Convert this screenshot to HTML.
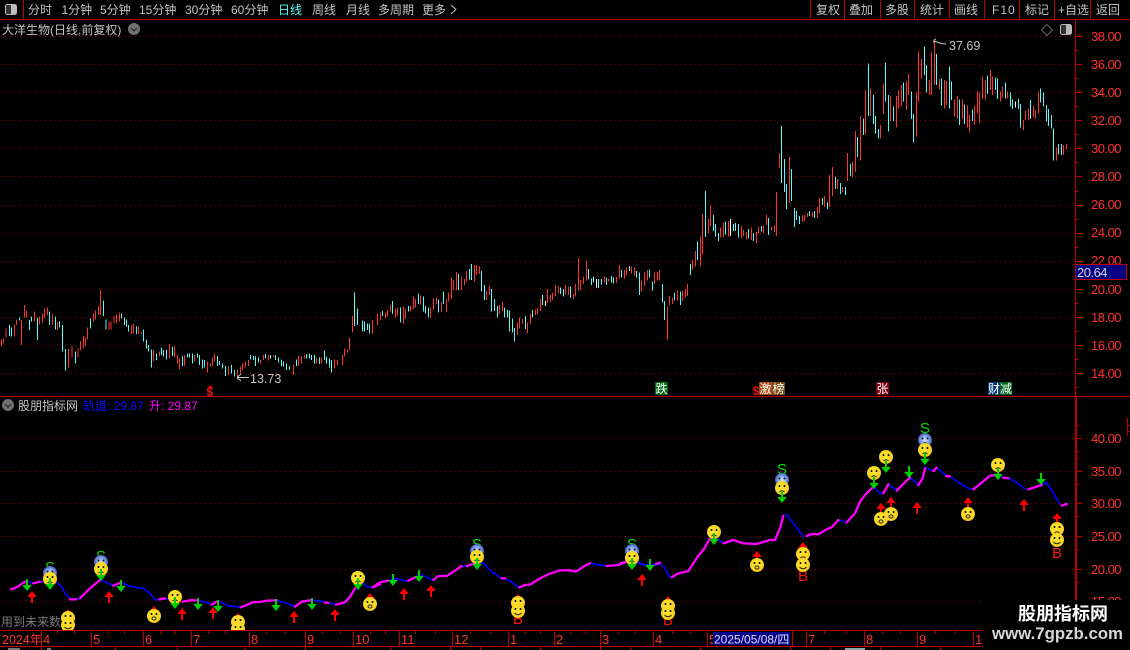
<!DOCTYPE html>
<html><head><meta charset="utf-8"><style>
html,body{margin:0;padding:0;background:#000;width:1130px;height:650px;overflow:hidden}
svg{display:block}
text{font-family:"Liberation Sans","Noto Sans CJK SC",sans-serif;font-size:12px}
.t{fill:#c4c4c4}
.y{fill:#ff3232;letter-spacing:-.5px;font-size:13px}
.m{fill:#ff3232;font-size:13px}
.b{fill:#fff;font-size:12px}
.bars path{fill:none;stroke-width:3;shape-rendering:crispEdges}
.R{stroke:#ff3232}.C{stroke:#54fcfc}.W{stroke:#fff}
.ln path{fill:none;stroke-linecap:round;stroke-linejoin:round}
.M{stroke:#ff00ff;stroke-width:7}.B{stroke:#0000ff;stroke-width:5}
.S{fill:#00e000;font-size:15px}
.Bt{fill:#ff1010;font-size:15px}
</style></head><body>
<svg width="1130" height="650" viewBox="0 0 1130 650" xmlns="http://www.w3.org/2000/svg">
<defs>
<radialGradient id="yg" cx=".45" cy=".4" r=".7"><stop offset="0" stop-color="#ffe830"/><stop offset=".75" stop-color="#f8d020"/><stop offset="1" stop-color="#c89810"/></radialGradient>
<radialGradient id="bg" cx=".5" cy=".5" r=".6"><stop offset="0" stop-color="#d0e4ff"/><stop offset=".6" stop-color="#7090e0"/><stop offset="1" stop-color="#203080"/></radialGradient>
<g id="fS"><circle r="7" fill="url(#yg)"/><circle cx="-2.500" cy="-2" r="1"/><circle cx="2.500" cy="-2" r="1"/><path d="M-3.500 2Q0 5.500 3.500 2" fill="none" stroke="#222" stroke-width="1"/></g>
<g id="fF"><circle r="7" fill="url(#yg)"/><circle cx="-2.500" cy="-2" r="1"/><circle cx="2.500" cy="-2" r="1"/><path d="M-2.500 4Q0 1.500 2.500 4" fill="none" stroke="#222" stroke-width="1"/></g>
<g id="fO"><circle r="7" fill="url(#yg)"/><circle cx="-2.500" cy="-2" r="1"/><circle cx="2.500" cy="-2" r="1"/><ellipse cy="2.500" rx="2" ry="1.600" fill="none" stroke="#222" stroke-width="1"/></g>
<g id="fB"><circle r="7" fill="url(#bg)"/><circle cx="-2.500" cy="-1.500" r="1" fill="#111"/><circle cx="2.500" cy="-1.500" r="1" fill="#111"/><path d="M-2.500 4Q0 1.500 2.500 4" fill="none" stroke="#111" stroke-width="1"/></g>
<g id="aG"><path d="M-1 0H1V6H4.800L0 12L-4.800 6H-1Z" fill="#00d000"/></g>
<g id="aR"><path d="M0 0L4.800 6H1V12H-1V6H-4.800Z" fill="#ff0000"/></g>
</defs>
<rect width="1130" height="650" fill="#000"/>

<!-- grids -->
<g stroke="#900000" stroke-width="1" stroke-dasharray="1 4" fill="none" shape-rendering="crispEdges">
<path d="M0 36.500H1075M0 64.500H1075M0 92.500H1075M0 120.500H1075M0 148.500H1075M0 176.500H1075M0 205.500H1075M0 233.500H1075M0 261.500H1075M0 289.500H1075M0 317.500H1075M0 345.500H1075M0 373.500H1075"/>
<path d="M0 438.500H1075M0 471.500H1075M0 503.500H1075M0 536.500H1075M0 569.500H1075M0 601.500H1075"/>
</g>

<!-- candles 0-380 -->
<g class="bars" transform="translate(0,280) scale(.33333)">
<path class="R" d="M4 178V198M10 175V190M18 145V172M43 133V170M49 118V135M64 120V195M73 75V112M79 92V112M103 95V125M118 110V133M127 100V128M133 85V112M142 82V105M157 102V135M172 125V150M205 207V262M216 198V232M234 205V232M242 183V212M250 168V205M256 172V198M262 142V178M280 100V125M286 92V118M295 78V105M301 30V105M327 125V150M333 125V148M342 108V130M349 103V130M358 97V125M394 135V162M400 130V160M415 140V160M424 155V162M460 210V243M478 215V230M508 192V235M523 200V232M532 225V250M538 235V268M553 225V258M583 225V245M622 245V278M631 250V260M637 232V258M643 220V245M685 258V285M712 268V298M721 260V280M727 250V270M736 245V262M745 240V258M781 240V250M790 225V240M805 225V242M820 225V232M880 255V285M895 228V258M904 228V250M913 225V235M949 232V250M964 232V250M1003 238V265M1012 240V255M1027 225V255M1033 205V230M1042 208V218M1048 172V210M1057 108V158M1117 120V162M1132 100V135"/>
<path class="C" d="M28 135V168M34 143V170M58 112V122M88 120V150M94 110V125M112 112V180M148 95V135M166 110V148M178 125V142M187 135V215M196 207V272M226 215V250M271 115V145M310 62V108M318 118V148M364 100V115M373 113V135M379 118V140M385 135V155M409 140V162M430 148V185M439 178V205M445 195V215M454 208V262M469 220V240M484 203V225M490 210V230M499 210V238M517 200V228M547 228V258M562 220V232M568 220V232M577 220V250M592 220V232M598 225V255M607 238V265M613 240V262M652 228V258M658 243V255M667 250V265M676 258V288M694 255V280M703 270V290M751 225V238M760 228V240M766 228V258M775 233V248M796 222V235M811 225V235M826 225V240M835 232V248M844 238V258M850 245V260M859 250V270M868 258V270M889 238V258M919 222V235M928 220V235M934 225V240M943 225V250M958 232V252M973 212V240M979 230V250M988 235V262M994 240V278M1063 37V138M1072 85V135M1087 122V155M1093 125V155M1102 130V150M1108 130V160"/>
</g>
<!-- candles 380-680 -->
<g class="bars" transform="translate(380,240) scale(.33333)">
<path class="R" d="M1 218V240M16 218V235M22 210V230M31 195V215M46 207V232M52 202V228M70 200V252M76 207V237M91 198V215M100 170V207M106 177V202M121 167V193M151 202V233M160 175V210M169 172V192M184 186V216M199 178V216M205 158V185M214 113V177M220 122V150M229 96V150M244 110V150M253 117V137M259 93V125M283 75V125M289 75V105M298 78V102M319 153V180M328 138V165M358 195V222M367 186V213M412 247V285M418 232V265M427 237V252M442 247V281M451 220V252M466 208V225M472 204V222M481 177V213M502 147V188M511 165V186M517 158V180M526 135V168M535 138V160M556 135V163M565 140V165M580 162V177M586 132V170M595 54V152M601 120V150M610 110V132M619 63V122M673 110V127M685 115V125M709 111V129M718 75V115M733 90V117M739 82V105M754 80V100M763 83V108M784 122V155M793 98V138M802 90V122M823 98V132M832 96V122M838 90V122M862 200V300M868 168V197M877 172V192M892 152V182"/>
<path class="C" d="M7 213V228M37 183V222M61 202V248M85 198V215M115 160V192M130 170V215M136 198V220M145 203V233M175 178V218M190 155V192M235 102V150M268 87V118M274 72V120M304 93V155M313 135V180M334 147V215M343 177V213M352 198V233M373 203V232M382 210V233M388 212V275M397 235V278M403 264V305M436 228V267M457 210V232M487 165V195M541 143V162M550 147V170M571 140V174M625 87V118M634 115V135M640 110V128M655 117V144M664 117V133M679 113V135M694 108V127M700 113V130M724 90V113M748 78V93M769 93V113M778 97V165M808 88V113M817 125V152M847 132V188M853 183V240M883 158V182"/>
<path class="W" d="M496 183V198M649 117V143"/>
</g>
<!-- candles 680-857 -->
<g class="bars" transform="translate(640,120) scale(.33333)">
<path class="R" d="M127 513V543M137 508V532M142 492V528M157 420V450M166 393V440M181 350V437M187 282V405M206 297V340M211 255V318M241 322V352M250 308V353M265 303V350M304 318V354M310 330V348M319 336V358M334 323V360M349 336V369M355 320V340M370 318V339M379 285V315M394 319V330M403 315V336M409 216V348M418 99V144M448 111V249M487 287V306M493 285V303M502 279V291M517 276V291M532 261V294M538 234V279M553 228V261M568 165V261M577 141V228M592 177V207M607 201V216M622 99V183M637 126V171M646 33V156"/>
<path class="C" d="M122 515V555M152 432V465M172 365V420M196 213V351M220 285V333M226 312V350M235 339V363M256 305V343M280 312V333M286 309V333M295 312V352M325 327V355M340 339V363M364 318V335M385 294V345M424 18V189M433 117V216M439 192V267M454 147V243M463 264V321M469 273V300M478 288V312M508 273V288M523 273V294M547 234V255M562 246V267M586 171V207M601 189V222M616 201V225M631 132V168M652 51V111"/>
<path class="W" d="M271 297V348"/>
</g>
<!-- candles 860+ -->
<g class="bars" transform="translate(860,40) scale(.33333)">
<path class="R" d="M1 228V362M16 150V285M31 145V228M61 255V296M70 132V222M91 168V243M109 168V263M115 150V205M124 135V200M139 123V210M145 102V165M169 158V290M175 35V185M184 57V115M208 120V165M214 38V165M223 2V135M238 115V148M253 120V205M259 123V195M283 178V230M292 168V237M307 178V237M322 195V262M328 225V278M343 198V255M352 155V220M358 158V250M367 110V175M376 120V180M391 90V150M397 110V165M421 155V185M427 140V172M442 155V175M490 240V270M496 212V240M505 205V240M520 197V232M526 210V237M535 155V220M589 323V362M610 315V345M619 312V328"/>
<path class="C" d="M10 235V285M25 70V228M40 165V252M46 228V280M55 267V295M76 67V185M85 165V275M100 200V243M130 128V185M154 155V237M160 222V308M193 20V105M199 75V158M229 42V135M244 115V197M268 80V205M274 125V180M298 178V255M313 193V252M337 208V243M382 107V162M406 112V150M412 115V177M436 128V175M451 158V200M457 178V207M475 177V207M481 192V263M511 180V237M541 145V187M550 158V200M559 195V245M565 207V258M574 225V265M580 265V362M595 312V343M604 312V345"/>
<path class="W" d="M466 185V203"/>
</g>

<!-- high / low labels -->
<path d="M934 43Q933 40 936 39M934 41L940 43Q943 44 946 44" fill="none" stroke="#c4c4c4" stroke-width="1"/>
<text x="949" y="50" class="t" style="font-size:12.500px">37.69</text>
<path d="M237 377.500H249M237 377.500L241 374M237 377.500L241 381" fill="none" stroke="#c4c4c4" stroke-width="1"/>
<text x="250" y="383" class="t" style="font-size:12.500px">13.73</text>
<path d="M210.500 385L213 388H208Z" fill="#f00"/>
<text x="206.500" y="396" fill="#f01010" font-weight="bold" style="font-size:12px">$</text>

<!-- badges -->
<rect x="655" y="382" width="13" height="13" fill="#006a10"/><text x="655.500" y="393" class="b">跌</text>
<text x="752.500" y="395" fill="#f01010" font-weight="bold" style="font-size:12px">$</text>
<rect x="759" y="382" width="13" height="13" fill="#a84a10"/><text x="759.500" y="393" class="b">激</text>
<rect x="772" y="382" width="13" height="13" fill="#7a4a10"/><text x="772.500" y="393" class="b">榜</text>
<rect x="876" y="382" width="13" height="13" fill="#800010"/><text x="876.500" y="393" class="b">张</text>
<rect x="988" y="382" width="12" height="13" fill="#0a3a70"/><text x="988" y="393" class="b">财</text>
<rect x="1000" y="382" width="12" height="13" fill="#006a20"/><text x="1000" y="393" class="b">减</text>

<!-- indicator line left -->
<g class="ln" transform="translate(0,530) scale(.33333)">
<path class="B" d="M80 153L95 158L105 160M120 155L165 155L185 170L195 190L210 207M228 208L240 205M300 148L320 158L340 167M362 158L395 170L430 175L450 190L465 210L478 208M495 205L525 215M595 211L610 215L635 222M650 215L660 215L685 227L720 232M830 211L860 220L885 230M935 210L975 215M985 218L1008 224M1065 175L1090 160L1100 170L1118 172"/>
<path class="M" d="M33 178L50 172L70 158L80 153M100 160L120 155M210 208L228 208M240 205L270 175L300 150M340 167L362 158M478 208L495 205M548 215L570 211L595 211M635 224L650 215M722 232L740 225L760 216L780 216L800 212L830 211M885 230L905 215L935 210M975 218L985 218M1008 224L1035 217L1050 200L1065 175M1118 172L1140 163"/>
</g>
<g class="ln" transform="translate(360,520) scale(.33333)">
<path class="B" d="M85 182L110 175L135 183L145 182M165 172L180 162L200 172L220 180M305 138L320 138M345 128L370 130L395 155L425 175M435 175L460 190L475 202M690 130L720 135L740 138M795 127L830 128L850 135L870 140L900 130"/>
<path class="M" d="M38 202L60 187L85 182M145 182L165 172M220 180L235 168L260 168L285 152L305 138M320 138L345 130M425 175L435 175M478 202L495 195L510 194L540 175L565 163L600 151L630 151L648 155L670 140L690 130M740 138L775 135L795 127"/>
</g>
<g class="ln" transform="translate(620,370) scale(.33333)">
<path class="B" d="M50 575L75 585L108 583M120 580L135 595L150 622M270 505L295 508L310 520M497 432L520 460L550 500M655 450L680 457M760 350L780 370L790 370M805 343L830 362M870 322L895 345M915 292L940 303M950 293L980 318M990 319L1020 340L1045 355L1060 358M1130 315L1150 322M1165 323L1190 338L1215 357M1265 345L1280 338L1300 370L1318 400"/>
<path class="M" d="M0 580L20 575M108 582L120 578M155 622L175 610L205 603L220 580L235 557L250 540L270 505M310 520L340 510L370 520L410 522L450 510L465 510L480 475L490 437M560 498L575 492L595 493L620 478L635 472L655 450M680 457L705 430L720 395L735 375L760 350M790 370L805 343M830 362L870 322M895 345L908 325L915 295M940 303L950 293M978 319L990 319M1060 358L1085 338L1110 317L1130 315M1150 323L1165 325M1225 358L1265 345M1325 407L1340 402"/>
</g>

<!-- S / B (behind faces) -->
<text x="50" y="572" class="S" text-anchor="middle">S</text>
<text x="101" y="561" class="S" text-anchor="middle">S</text>
<text x="477" y="549" class="S" text-anchor="middle">S</text>
<text x="632" y="549" class="S" text-anchor="middle">S</text>
<text x="782" y="474" class="S" text-anchor="middle">S</text>
<text x="925" y="433" class="S" text-anchor="middle">S</text>
<text x="518" y="624" class="Bt" text-anchor="middle">B</text>
<text x="668" y="625" class="Bt" text-anchor="middle">B</text>
<text x="803" y="581" class="Bt" text-anchor="middle">B</text>
<text x="1057" y="558" class="Bt" text-anchor="middle">B</text>

<!-- red arrows -->
<use href="#aR" x="32" y="591"/><use href="#aR" x="109" y="591"/><use href="#aR" x="182" y="608"/><use href="#aR" x="213" y="607"/><use href="#aR" x="294" y="611"/><use href="#aR" x="335" y="609"/><use href="#aR" x="404" y="588"/><use href="#aR" x="431" y="585"/><use href="#aR" x="642" y="574"/><use href="#aR" x="917" y="502"/><use href="#aR" x="1024" y="499"/>
<use href="#aR" x="968" y="497"/><use href="#aR" x="881" y="503"/><use href="#aR" x="891" y="497"/><use href="#aR" x="1057" y="513"/><use href="#aR" x="154" y="606"/><use href="#aR" x="370" y="593"/><use href="#aR" x="757" y="551"/><use href="#aR" x="803" y="542"/><use href="#aR" x="68" y="609"/><use href="#aR" x="238" y="613"/><use href="#aR" x="518" y="594"/><use href="#aR" x="668" y="596"/>

<text x="1" y="626" fill="#7c7c7c">用到未来数</text>

<!-- faces -->
<use href="#fB" x="50" y="573"/><use href="#fB" x="101" y="562"/><use href="#fB" x="477" y="551"/><use href="#fB" x="632" y="551"/><use href="#fB" x="782" y="480"/><use href="#fB" x="925" y="440"/>
<use href="#fF" x="50" y="579"/><use href="#fF" x="101" y="569"/><use href="#fF" x="175" y="597"/><use href="#fF" x="358" y="578"/><use href="#fF" x="477" y="557"/><use href="#fF" x="632" y="558"/><use href="#fF" x="714" y="532"/><use href="#fF" x="782" y="488"/><use href="#fF" x="874" y="473"/><use href="#fF" x="886" y="457"/><use href="#fF" x="925" y="450"/><use href="#fF" x="998" y="465"/>
<use href="#fO" x="154" y="616"/><use href="#fO" x="370" y="604"/><use href="#fO" x="757" y="565"/><use href="#fO" x="881" y="519"/><use href="#fO" x="891" y="514"/><use href="#fO" x="968" y="514"/>
<use href="#fF" x="68" y="618"/><use href="#fS" x="68" y="625"/>
<use href="#fF" x="238" y="622"/><use href="#fF" x="238" y="629"/>
<use href="#fF" x="518" y="603"/><use href="#fS" x="518" y="611"/>
<use href="#fF" x="668" y="606"/><use href="#fS" x="668" y="613"/>
<use href="#fF" x="803" y="554"/><use href="#fS" x="803" y="565"/>
<use href="#fF" x="1057" y="529"/><use href="#fS" x="1057" y="540"/>

<!-- green arrows -->
<use href="#aG" x="27" y="579"/><use href="#aG" x="50" y="578"/><use href="#aG" x="101" y="569"/><use href="#aG" x="121" y="580"/><use href="#aG" x="175" y="597"/><use href="#aG" x="198" y="598"/><use href="#aG" x="218" y="600"/><use href="#aG" x="276" y="599"/><use href="#aG" x="312" y="598"/><use href="#aG" x="358" y="578"/><use href="#aG" x="393" y="574"/><use href="#aG" x="419" y="570"/><use href="#aG" x="477" y="558"/><use href="#aG" x="632" y="558"/><use href="#aG" x="650" y="559"/><use href="#aG" x="714" y="533"/><use href="#aG" x="782" y="491"/><use href="#aG" x="874" y="477"/><use href="#aG" x="886" y="461"/><use href="#aG" x="909" y="466"/><use href="#aG" x="925" y="453"/><use href="#aG" x="998" y="468"/><use href="#aG" x="1041" y="473"/>

<!-- clip bottom -->
<rect x="0" y="630" width="983" height="20" fill="#000"/>

<!-- axes & frame lines -->
<g stroke="#c00000" stroke-width="1" fill="none" shape-rendering="crispEdges">
<path d="M0 19.500H1130"/>
<path d="M23.500 0V19M810.500 0V19M844.500 0V19M880.500 0V19M914.500 0V19M949.500 0V19M984.500 0V19M1019.500 0V19M1054.500 0V19M1090.500 0V19"/>
<path d="M1075.500 20V630M1076.500 397V600"/>
<path d="M0 396.500H1130"/>
<path d="M1075 36.500H1082M1075 50.500H1079M1075 64.500H1082M1075 78.500H1079M1075 92.500H1082M1075 106.500H1079M1075 120.500H1082M1075 134.500H1079M1075 148.500H1082M1075 162.500H1079M1075 176.500H1082M1075 191.500H1079M1075 205.500H1082M1075 219.500H1079M1075 233.500H1082M1075 247.500H1079M1075 261.500H1082M1075 289.500H1082M1075 303.500H1079M1075 317.500H1082M1075 331.500H1079M1075 345.500H1082M1075 359.500H1079M1075 373.500H1082M1075 387.500H1079"/>
<path d="M1075 425.500H1079M1075 438.500H1082M1075 451.500H1079M1075 458.500H1079M1075 471.500H1082M1075 484.500H1079M1075 503.500H1082M1075 516.500H1079M1075 536.500H1082M1075 549.500H1079M1075 569.500H1082M1075 582.500H1079M1075 601.500H1082"/>
<path d="M1127.500 418V436M1127 425.500H1130M1127 431.500H1130"/>
<path d="M0 630.500H983M0 646.500H983"/>
<path d="M41.500 631V646M91.500 631V646M143.500 631V646M191.500 631V646M249.500 631V646M305.500 631V646M353.500 631V646M399.500 631V646M452.500 631V646M508.500 631V646M554.500 631V646M600.500 631V646M653.500 631V646M707.500 631V646M792.500 631V646M806.500 631V646M864.500 631V646M917.500 631V646M973.500 631V646"/>
<path d="M57.500 631V634M74.500 631V634M107.500 631V634M124.500 631V634M160.500 631V634M175.500 631V634M208.500 631V634M225.500 631V634M266.500 631V634M285.500 631V634M322.500 631V634M340.500 631V634M370.500 631V634M385.500 631V634M415.500 631V634M435.500 631V634M470.500 631V634M490.500 631V634M525.500 631V634M540.500 631V634M570.500 631V634M585.500 631V634M618.500 631V634M635.500 631V634M672.500 631V634M690.500 631V634M824.500 631V634M846.500 631V634M882.500 631V634M900.500 631V634M935.500 631V634M955.500 631V634"/>
<path d="M41.500 647V650M115.500 647V650M177.500 647V650M245.500 647V650M305.500 647V650M390.500 647V650M450.500 647V650M480.500 647V650M540.500 647V650M600.500 647V650M630.500 647V650M700.500 647V650M790.500 647V650M830.500 647V650M880.500 647V650M940.500 647V650"/>
</g>

<!-- y labels -->
<text x="1091" y="41" class="y">38.00</text><text x="1091" y="69" class="y">36.00</text><text x="1091" y="97" class="y">34.00</text><text x="1091" y="125" class="y">32.00</text><text x="1091" y="153" class="y">30.00</text><text x="1091" y="181" class="y">28.00</text><text x="1091" y="209" class="y">26.00</text><text x="1091" y="237" class="y">24.00</text><text x="1091" y="265" class="y">22.00</text><text x="1091" y="294" class="y">20.00</text><text x="1091" y="322" class="y">18.00</text><text x="1091" y="350" class="y">16.00</text><text x="1091" y="378" class="y">14.00</text>
<text x="1091" y="443" class="y">40.00</text><text x="1091" y="476" class="y">35.00</text><text x="1091" y="508" class="y">30.00</text><text x="1091" y="541" class="y">25.00</text><text x="1091" y="574" class="y">20.00</text><text x="1091" y="606" class="y">15.00</text>
<rect x="1075.500" y="264.500" width="51" height="15" fill="#000080" stroke="#c00000"/>
<text x="1077" y="277" fill="#d8d8d8" letter-spacing="-.5" style="font-size:13px">20.64</text>

<!-- time labels -->
<text x="2" y="644" class="m" style="font-size:12.500px">2024年</text>
<text x="43" y="644" class="m">4</text><text x="93" y="644" class="m">5</text><text x="145" y="644" class="m">6</text><text x="193" y="644" class="m">7</text><text x="251" y="644" class="m">8</text><text x="307" y="644" class="m">9</text><text x="355" y="644" class="m">10</text><text x="401" y="644" class="m">11</text><text x="454" y="644" class="m">12</text><text x="510" y="644" class="m">1</text><text x="556" y="644" class="m">2</text><text x="602" y="644" class="m">3</text><text x="655" y="644" class="m">4</text><text x="709" y="644" class="m">5</text><text x="808" y="644" class="m">7</text><text x="866" y="644" class="m">8</text><text x="919" y="644" class="m">9</text><text x="975" y="644" class="m">10</text>
<rect x="713" y="632" width="77" height="13" fill="#000090"/>
<text x="714" y="643.500" fill="#e0e0e0" style="font-size:12px">2025/05/08/四</text>
<rect x="845" y="648" width="20" height="2" fill="#8aa"/>
<rect x="8" y="648" width="12" height="2" fill="#777"/><rect x="47" y="648" width="4" height="2" fill="#777"/>

<!-- toolbar -->
<rect x="5.500" y="4.500" width="11" height="10" rx="2" fill="#333" stroke="#bbb"/><rect x="11" y="5" width="5" height="9" fill="#bbb"/>
<text x="28" y="14" class="t">分时</text>
<text x="61.500" y="14" class="t">1分钟</text>
<text x="100" y="14" class="t">5分钟</text>
<text x="139" y="14" class="t">15分钟</text>
<text x="185" y="14" class="t">30分钟</text>
<text x="231" y="14" class="t">60分钟</text>
<text x="278" y="14" fill="#54fcfc">日线</text>
<text x="312" y="14" class="t">周线</text>
<text x="346" y="14" class="t">月线</text>
<text x="378" y="14" class="t">多周期</text>
<text x="422" y="14" class="t">更多</text>
<path d="M451 5L456 9.500L451 14" fill="none" stroke="#c4c4c4"/>
<text x="816" y="14" class="t">复权</text>
<text x="849" y="14" class="t">叠加</text>
<text x="885" y="14" class="t">多股</text>
<text x="920" y="14" class="t">统计</text>
<text x="954" y="14" class="t">画线</text>
<text x="992" y="14" class="t" letter-spacing="1">F10</text>
<text x="1025" y="14" class="t">标记</text>
<text x="1058" y="14" class="t">+自选</text>
<text x="1096" y="14" class="t">返回</text>

<!-- title -->
<text x="2" y="34" class="t">大洋生物(日线,前复权)</text>
<circle cx="134" cy="29" r="6" fill="#707070"/><path d="M131 28L134 31L137 28" fill="none" stroke="#222" stroke-width="1.200"/>
<path d="M1047 24.500L1052.500 30L1047 35.500L1041.500 30Z" fill="none" stroke="#666"/>
<rect x="1060.500" y="24.500" width="11" height="10" rx="2" fill="#333" stroke="#bbb"/><rect x="1066" y="25" width="5" height="9" fill="#bbb"/>

<!-- sub header -->
<circle cx="8" cy="405" r="6" fill="#707070"/><path d="M5 404L8 407L11 404" fill="none" stroke="#222" stroke-width="1.200"/>
<text x="18" y="410" class="t">股朋指标网</text>
<text x="83" y="410" fill="#1010ff">轨道: 29.87</text>
<text x="149" y="410" fill="#ff00ff">升: 29.87</text>

<!-- watermark -->
<rect x="983" y="600" width="147" height="50" fill="#000"/>
<text x="1018" y="620" fill="#fff" font-weight="bold" style="font-size:18px">股朋指标网</text>
<text x="992" y="639" fill="#d8d8d8" font-weight="bold" style="font-size:17px" textLength="131" lengthAdjust="spacingAndGlyphs">www.7gpzb.com</text>
</svg>
</body></html>
